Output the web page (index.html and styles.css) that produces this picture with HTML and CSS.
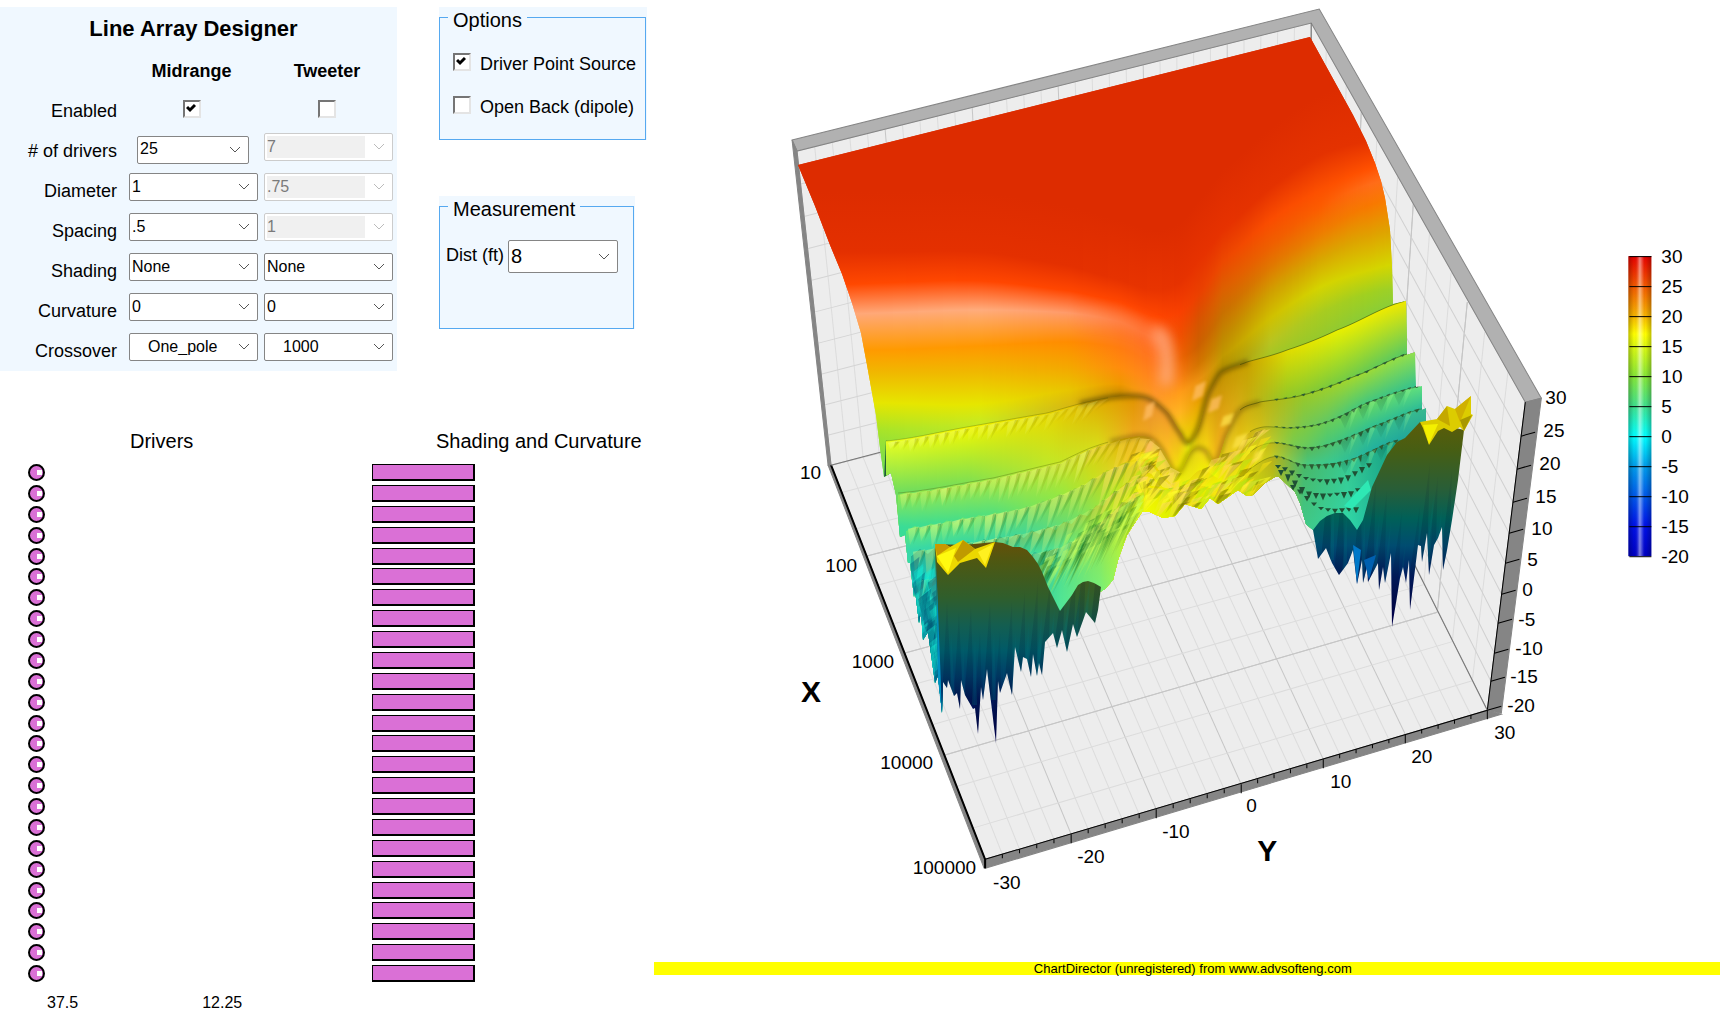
FILE: index.html
```
<!DOCTYPE html>
<html lang="en">
<head>
    <meta charset="UTF-8">
    <meta name="viewport" content="width=device-width, initial-scale=1.0">
    <title>Line Array Designer</title>
    <link rel="stylesheet" href="styles.css">
</head>
<body>
    <main class="app">
        <div class="designer">
            <div class="controls">
                <form class="panel">
                    <h1>Line Array Designer</h1>
                    <div class="fields">
                        <span></span>
                        <h2>Midrange</h2>
                        <h2>Tweeter</h2>

                        <label for="midEnabled">Enabled</label>
                        <input type="checkbox" id="midEnabled" checked>
                        <input type="checkbox" id="twEnabled" aria-label="Tweeter enabled">

                        <label for="midDrivers"># of drivers</label>
                        <select id="midDrivers" class="narrow"><option>25</option></select>
                        <select id="twDrivers" aria-label="Tweeter drivers" disabled><option>7</option></select>

                        <label for="midDiameter">Diameter</label>
                        <select id="midDiameter"><option>1</option></select>
                        <select id="twDiameter" aria-label="Tweeter diameter" disabled><option>.75</option></select>

                        <label for="midSpacing">Spacing</label>
                        <select id="midSpacing"><option>.5</option></select>
                        <select id="twSpacing" aria-label="Tweeter spacing" disabled><option>1</option></select>

                        <label for="midShading">Shading</label>
                        <select id="midShading"><option>None</option></select>
                        <select id="twShading" aria-label="Tweeter shading"><option>None</option></select>

                        <label for="midCurvature">Curvature</label>
                        <select id="midCurvature"><option>0</option></select>
                        <select id="twCurvature" aria-label="Tweeter curvature"><option>0</option></select>

                        <label for="crossType">Crossover</label>
                        <select id="crossType" class="indent"><option>One_pole</option></select>
                        <select id="crossFreq" class="indent" aria-label="Crossover frequency"><option>1000</option></select>
                    </div>
                </form>

                <div class="groups">
                    <div class="group">
                        <fieldset>
                            <legend>Options</legend>
                            <div class="option">
                                <input type="checkbox" id="pointSource" checked>
                                <label for="pointSource">Driver Point Source</label>
                            </div>
                            <div class="option">
                                <input type="checkbox" id="openBack">
                                <label for="openBack">Open Back (dipole)</label>
                            </div>
                        </fieldset>
                    </div>
                    <div class="group measurement">
                        <fieldset>
                            <legend>Measurement</legend>
                            <div class="distance">
                                <label for="dist">Dist (ft)</label>
                                <select id="dist"><option>8</option></select>
                            </div>
                        </fieldset>
                    </div>
                </div>
            </div>

            <div class="arrays">
                <section class="drivers">
                    <h3>Drivers</h3>
                    <ul id="driverList"></ul>
                    <div class="lengths"><span>37.5</span><span>12.25</span></div>
                </section>
                <section class="shading">
                    <h3>Shading and Curvature</h3>
                    <ul id="shadingList"></ul>
                </section>
            </div>
        </div>

        <div class="chart">
            <div class="plot">
                <svg id="axes" viewBox="654 0 1066 962" role="img" aria-label="Surface chart">
                    <defs>
                        <linearGradient id="scale" x1="0" y1="0" x2="0" y2="1">
                            <stop offset="0" stop-color="#e60000"/>
                            <stop offset=".1" stop-color="#f05800"/>
                            <stop offset=".2" stop-color="#f5b400"/>
                            <stop offset=".26" stop-color="#ffff00"/>
                            <stop offset=".4" stop-color="#86e636"/>
                            <stop offset=".5" stop-color="#3fe08c"/>
                            <stop offset=".6" stop-color="#00ffff"/>
                            <stop offset=".7" stop-color="#009cea"/>
                            <stop offset=".8" stop-color="#0058e8"/>
                            <stop offset=".9" stop-color="#0010e6"/>
                            <stop offset="1" stop-color="#0000c0"/>
                        </linearGradient>
                        <linearGradient id="shine">
                            <stop offset="0" stop-color="#000" stop-opacity=".25"/>
                            <stop offset=".25" stop-color="#000" stop-opacity="0"/>
                            <stop offset=".38" stop-color="#fff" stop-opacity=".1"/>
                            <stop offset=".5" stop-color="#fff" stop-opacity=".5"/>
                            <stop offset=".65" stop-color="#fff" stop-opacity=".1"/>
                            <stop offset=".75" stop-color="#000" stop-opacity="0"/>
                            <stop offset="1" stop-color="#000" stop-opacity=".25"/>
                        </linearGradient>
                    </defs>
                    <polygon fill="#ededed" points="797,151 1311,23 1525,402 1487,710 985,859 831,465"/>
                    <g id="grid"></g>
                    <g stroke="#858585">
                        <polygon fill="#b1b1b1" points="792,140 1319,9 1541,398 1525,402 1311,23 797,151"/>
                        <polygon fill="#858585" points="1525,402 1541,398 1501,713 1487,710"/>
                        <polygon fill="#858585" points="985,859 1487,710 1501,714 985,868"/>
                        <polygon fill="#858585" points="792,140 797,151 831,465 828,465"/>
                        <polygon fill="#858585" points="828,465 831,465 985,859 984,868"/>
                    </g>
                    <path fill="none" stroke="#000" stroke-width="2" d="M831 465L985 859V868"/>
                    <path fill="none" stroke="#000" d="M985 859L1487 710L1525 402"/>
                    <path fill="none" stroke="#777" d="M1311 23V40M831 465L884 451M1487 710L1405 546"/>
                    <g id="ticks"></g>
                    <g id="labels"></g>
                    <text class="axis-title" x="811" y="702">X</text>
                    <text class="axis-title" x="1267" y="861">Y</text>
                    <rect x="1628" y="256" width="23" height="300" fill="url(#scale)"/>
                    <rect x="1628" y="256" width="23" height="300" fill="url(#shine)"/>
                    <g id="legend"></g>
                </svg>
                <canvas id="surface" width="1066" height="962"></canvas>
            </div>
            <p class="notice">ChartDirector (unregistered) from www.advsofteng.com</p>
        </div>
    </main>
    <script src="chart.js"></script>
</body>
</html>
```
FILE: styles.css
```
body {
    margin: 0;
    background: #fff;
    color: #000;
    font-family: "Liberation Sans", Arial, sans-serif;
    font-size: 18px;
    line-height: 20px;
}
h1, h2, h3, p, ul, fieldset {
    margin: 0;
    padding: 0;
}
.app {
    display: flex;
    align-items: flex-start;
}
.designer {
    width: 38%;
    flex-shrink: 0;
    padding-top: 7px;
}
.controls {
    display: flex;
    gap: 42px;
}
.panel {
    width: 397px;
    height: 364px;
    background: #f0f8ff;
}
.panel h1 {
    padding: 10px 10px 0 0;
    font-size: 22px;
    line-height: 24px;
    text-align: center;
}
.panel h2 {
    padding: 8px 4px 0 0;
    font-size: 18px;
    text-align: center;
}
.fields {
    display: grid;
    grid-template-columns: 117px 129px 130px;
    grid-auto-rows: 40px;
    column-gap: 6px;
    margin-top: 6px;
    align-items: center;
}
.fields > :nth-child(3n + 1) {
    padding-top: 8px;
    text-align: right;
}
.fields > :not(:nth-child(3n + 1)) {
    margin-left: 6px;
    margin-right: -6px;
}
input[type="checkbox"] {
    appearance: none;
    box-sizing: border-box;
    width: 18px;
    height: 18px;
    margin: 0;
    border: 2px solid;
    border-color: #757575 #e4e4e4 #e4e4e4 #757575;
    background: #fff;
}
.fields input[type="checkbox"] {
    justify-self: center;
    margin: 4px -4px 0 4px;
}
input[type="checkbox"]:checked {
    background: #fff url("data:image/svg+xml,%3Csvg xmlns='http://www.w3.org/2000/svg' width='10' height='10'%3E%3Cpath d='M1 4L4 7L9 2' fill='none' stroke='black' stroke-width='3'/%3E%3C/svg%3E") 1px 1px no-repeat;
}
select {
    appearance: none;
    box-sizing: border-box;
    width: 100%;
    height: 28px;
    padding: 0 26px 2px 2px;
    border: 1px solid #858585;
    border-radius: 2px;
    background: #fff url("data:image/svg+xml,%3Csvg xmlns='http://www.w3.org/2000/svg' width='12' height='8'%3E%3Cpath d='M1 1L6 6L11 1' fill='none' stroke='%23555'/%3E%3C/svg%3E") right 7px center no-repeat;
    color: #000;
    font: 16px "Liberation Sans", Arial, sans-serif;
}
.fields select {
    width: 129px;
}
.fields select.narrow {
    width: 112px;
    margin-left: 14px;
    margin-top: 5px;
}
.fields select.indent {
    padding-left: 18px;
}
select:disabled {
    border-color: #ccc;
    background:
        url("data:image/svg+xml,%3Csvg xmlns='http://www.w3.org/2000/svg' width='12' height='8'%3E%3Cpath d='M1 1L6 6L11 1' fill='none' stroke='%23bbb'/%3E%3C/svg%3E") right 7px center no-repeat,
        linear-gradient(#f0f0f0, #f0f0f0) 2px center / 98px 22px no-repeat,
        #fff;
    color: #7a7a7a;
    opacity: 1;
}
.group {
    width: 208px;
    height: 133px;
    margin-bottom: 56px;
    background: #f0f8ff;
}
.measurement {
    width: 196px;
}
fieldset {
    box-sizing: border-box;
    height: 133px;
    margin-right: 1px;
    padding-top: 24px;
    border: 1px solid #56a9f0;
}
legend {
    height: 20px;
    margin-left: 8px;
    padding: 0 5px;
    font-size: 20px;
    line-height: 26px;
}
.option {
    display: flex;
    align-items: center;
    gap: 9px;
    height: 22px;
    margin: 0 0 21px 13px;
    white-space: nowrap;
}
.option label {
    padding-top: 3px;
}
.distance {
    display: flex;
    align-items: center;
    gap: 4px;
    padding-left: 6px;
    white-space: nowrap;
}
.distance label {
    padding-bottom: 4px;
}
.distance select {
    width: 110px;
    height: 33px;
    font-size: 20px;
}
.arrays {
    display: flex;
    margin-top: 44px;
}
.arrays h3 {
    font-size: 20px;
    font-weight: normal;
    line-height: 24px;
}
.drivers {
    box-sizing: border-box;
    width: 372px;
    padding-left: 28px;
}
.drivers h3 {
    padding-left: 102px;
}
.shading h3 {
    padding-left: 64px;
}
.arrays ul {
    display: flex;
    flex-direction: column;
    justify-content: space-between;
    height: 518px;
    margin-top: 11px;
    list-style: none;
}
.arrays li {
    box-sizing: border-box;
    height: 17px;
    border: 2px solid #000;
    background: #da70d6;
}
.drivers li {
    width: 17px;
    border-radius: 50%;
    background: linear-gradient(#fff, #fff) 7px 4px / 5px 5px no-repeat, #da70d6;
}
.shading li {
    width: 103px;
    border-width: 1px 2px 2px 1px;
}
.lengths {
    display: flex;
    gap: 124px;
    padding: 11px 0 0 19px;
    font-size: 16px;
}
.chart {
    flex: 1;
    min-width: 0;
}
.plot {
    position: relative;
}
.plot svg {
    display: block;
    width: 100%;
}
/* surface is painted over the floor and walls */
.plot canvas {
    position: absolute;
    top: 0;
    left: 0;
    width: 100%;
    height: 100%;
    pointer-events: none;
}
.plot text {
    font-size: 19px;
}
.plot .end {
    text-anchor: end;
}
.plot .axis-title {
    font-size: 30px;
    font-weight: bold;
    text-anchor: middle;
}
.notice {
    padding-left: 12px;
    background: #ff0;
    font-size: 13px;
    line-height: 13px;
    text-align: center;
}
```
FILE: chart.js
```
// Driver and shading columns
const driverCount = Number(document.getElementById('midDrivers').value);
for (let i = 0; i < driverCount; i++) {
    document.getElementById('driverList').appendChild(document.createElement('li'));
    document.getElementById('shadingList').appendChild(document.createElement('li'));
}

const NS = 'http://www.w3.org/2000/svg';

function line(parent, x1, y1, x2, y2, color, width) {
    const el = document.createElementNS(NS, 'line');
    const attrs = { x1, y1, x2, y2, stroke: color, 'stroke-width': width || 1 };
    for (const key in attrs) el.setAttribute(key, attrs[key]);
    document.getElementById(parent).appendChild(el);
}

function label(parent, x, y, text, cls) {
    const el = document.createElementNS(NS, 'text');
    el.setAttribute('x', x);
    el.setAttribute('y', y + 7);
    if (cls) el.setAttribute('class', cls);
    el.textContent = text;
    document.getElementById(parent).appendChild(el);
}

const mix = (a, b, t) => a + (b - a) * t;
const lerpPt = (list, v) => {
    const i = Math.min(Math.floor(v), list.length - 2);
    return [mix(list[i][0], list[i + 1][0], v - i), mix(list[i][1], list[i + 1][1], v - i)];
};

// Corners of the axis box along each scale
const yFront = [[985, 859], [1071, 834], [1156, 809], [1241, 784], [1323, 759], [1405, 734], [1487, 710]];
const yBack = [[831, 465], [911, 445], [991, 425], [1071, 405], [1149, 385], [1227, 365], [1305, 345]];
const yTop = [[797, 151], [885, 129], [972, 107], [1058, 86], [1143, 65], [1227, 44], [1311, 23]];
const xLeft = [[831, 465], [866, 556], [904, 653], [944, 755], [985, 859]];
const xRight = [[1305, 345], [1347, 430], [1392, 520], [1437, 612], [1487, 710]];
const xTop = [[1311, 23], [1361, 112], [1413, 204], [1467, 302], [1525, 402]];
const zRight = [402, 436, 469, 502, 533, 563, 594, 623, 653, 681, 710];

for (let i = 0; i <= 30; i++) {
    const v = i / 5;
    const major = i % 5 === 0;
    const a = lerpPt(yFront, v), b = lerpPt(yBack, v), c = lerpPt(yTop, v);
    const color = major ? '#c6c6c6' : '#dcdcdc';
    line('grid', a[0], a[1], b[0], b[1], color);
    line('grid', b[0], b[1], c[0], c[1], color);
    line('ticks', a[0], a[1], a[0], a[1] + (major ? 9 : 4), '#000');
}
for (let d = 0; d < 4; d++) {
    [0, 0.3, 0.7, 1].forEach(f => {
        const a = lerpPt(xLeft, d + f), b = lerpPt(xRight, d + f), c = lerpPt(xTop, d + f);
        const color = f === 0 || f === 1 ? '#c6c6c6' : '#dcdcdc';
        line('grid', a[0], a[1], b[0], b[1], color);
        line('grid', b[0], b[1], c[0], c[1], color);
    });
}
zRight.forEach((y, i) => {
    const x = 1525 - (y - 402) * 38 / 308;
    const left = [797 + i * 3.4, 151 + i * 33 - i * i * 0.16];
    const back = [1311 - i * 0.6, 23 + i * 32.2];
    line('grid', x, y, back[0], back[1], '#d0d0d0');
    line('grid', left[0], left[1], back[0], back[1], '#d4d4d4');
    if (i > 0) line('ticks', x, y, x + 14, y - 4, '#000');
});

[[821, 472, 10], [857, 565, 100], [894, 661, 1000], [933, 762, 10000], [976, 867, 100000]]
    .forEach(l => label('labels', l[0], l[1], l[2], 'end'));
[[993, 882, -30], [1077, 856, -20], [1162, 831, -10], [1246, 805, 0], [1330, 781, 10], [1411, 756, 20], [1494, 732, 30]]
    .forEach(l => label('labels', l[0], l[1], l[2]));
[[1545, 397], [1543, 430], [1539, 463], [1535, 496], [1531, 528], [1527, 559], [1522, 589], [1518, 619], [1515, 648], [1510, 676], [1507, 705]]
    .forEach((l, i) => label('labels', l[0], l[1], 30 - i * 5));
for (let i = 0; i <= 10; i++) {
    line('legend', 1629, 256.5 + i * 30, 1651, 256.5 + i * 30, '#000');
    label('legend', 1661, 256 + i * 30, 30 - i * 5);
}

// Surface
const ctx = document.getElementById('surface').getContext('2d');
ctx.translate(-654, 0);

let seed = 7;
function rand() {
    seed = (seed * 16807) % 2147483647;
    return seed / 2147483647;
}

function mixColor(a, b, t) {
    const p = parseInt(a, 16), q = parseInt(b, 16);
    const ch = s => Math.round(mix((p >> s) & 255, (q >> s) & 255, t));
    return 'rgb(' + ch(16) + ',' + ch(8) + ',' + ch(0) + ')';
}

function poly(points, fill) {
    ctx.beginPath();
    points.forEach(p => ctx.lineTo(p[0], p[1]));
    ctx.closePath();
    ctx.fillStyle = fill;
    ctx.fill();
}

// facet that fades out towards its last point
function facet(a, b, tip, rgb, alpha) {
    const g = ctx.createLinearGradient((a[0] + b[0]) / 2, (a[1] + b[1]) / 2, tip[0], tip[1]);
    g.addColorStop(0, 'rgba(' + rgb + ',' + alpha + ')');
    g.addColorStop(1, 'rgba(' + rgb + ',' + alpha * 0.25 + ')');
    poly([a, b, tip], g);
}

// index of the segment that holds x, and the place in it
function locate(list, x) {
    let i = 0;
    while (i < list.length - 2 && x > list[i + 1][0]) i++;
    const t = (x - list[i][0]) / (list[i + 1][0] - list[i][0]);
    return [i, Math.max(0, Math.min(1, t))];
}

function spline(list, x, get) {
    const [i, t] = locate(list, x);
    const p = k => get(list[Math.max(0, Math.min(list.length - 1, k))]);
    const a = p(i - 1), b = p(i), c = p(i + 1), d = p(i + 2);
    return b + t * (c - a + t * (2 * a - 5 * b + 4 * c - d + t * (3 * (b - c) + d - a))) / 2;
}

const outline = [
    [798, 165], [1310, 37], [1353, 115], [1366, 141], [1375, 163], [1381, 181], [1385, 198], [1390, 230], [1392, 267], [1393, 304],
    [1406, 301], [1407, 355], [1415, 352], [1416, 387], [1422, 386], [1422, 410], [1426, 408], [1426, 440], [1400, 520],
    [1363, 530], [1313, 530], [1306, 524], [1300, 503], [1295, 492], [1279, 477], [1275, 477], [1265, 483], [1253, 495],
    [1247, 496], [1238, 490], [1218, 504], [1210, 498], [1201, 509], [1185, 504], [1175, 516], [1163, 518], [1150, 512],
    [1142, 512], [1127, 535], [1118, 560], [1113, 580], [1105, 589], [1095, 595], [1060, 616], [1040, 600], [945, 600],
    [942, 713], [938, 676], [935, 683],
    [928, 632], [923, 640], [921, 612], [919, 623], [915, 590], [914, 597], [910, 563], [908, 563], [905, 535], [900, 537],
    [896, 495], [891, 473], [884, 477], [880, 448], [876, 415], [867, 365], [861, 333], [852, 303], [842, 274], [830, 245], [815, 206]
];
ctx.save();
ctx.beginPath();
outline.forEach(p => ctx.lineTo(p[0], p[1]));
ctx.closePath();
ctx.clip();

// smooth low frequency part, x then [y, colour] from back to front
const smooth = [
    [790, [252, 'e43000'], [287, 'ff4800'], [316, 'ffa878'], [350, 'ff9a00'], [373, 'f0b800'], [403, 'e6e600'], [430, 'a8e428'], [490, '58d868']],
    [880, [252, 'e43000'], [283, 'ff4800'], [313, 'ffa878'], [350, 'ff9a00'], [373, 'f0b800'], [403, 'e6e600'], [430, 'a8e428'], [480, '60d860']],
    [980, [252, 'e43000'], [281, 'ff4600'], [310, 'ffac7c'], [346, 'ff9800'], [372, 'f0b800'], [404, 'e6e600'], [422, 'c8ea20'], [450, 'a8e430']],
    [1070, [266, 'e43000'], [291, 'ff4600'], [313, 'ff9a68'], [342, 'ff8c00'], [368, 'f4a800'], [390, 'e8c400'], [405, 'd8b810'], [430, 'd0c010']],
    [1120, [280, 'e63200'], [302, 'ff4600'], [322, 'ff7838'], [348, 'ff7c10'], [368, 'ff8c0c'], [384, 'f09800'], [396, 'c08800'], [425, 'd89000']],
    [1155, [290, 'e83400'], [316, 'ff4600'], [338, 'ff6820'], [362, 'ff7820'], [380, 'ff8820'], [396, 'ff9828'], [410, 'ffa828'], [440, 'f0b020']],
    [1180, [282, 'e63200'], [312, 'f84000'], [336, 'f05000'], [358, 'ee6200'], [376, 'f87c10'], [392, 'ff9c18'], [412, 'ffb420'], [445, 'e8e000']],
    [1198, [260, 'e63200'], [294, 'ea4000'], [322, 'd65400'], [345, 'cc6000'], [364, 'd47400'], [380, 'ec9010'], [400, 'e8a000'], [435, 'e8d000']],
    [1222, [230, 'e63200'], [262, 'ec4800'], [290, 'dc6000'], [313, 'c87000'], [338, 'c08800'], [356, 'c09800'], [374, 'a88800'], [400, 'd0a000']],
    [1270, [188, 'e43200'], [220, 'fa4c00'], [246, 'ee6000'], [267, 'e07800'], [293, 'd0a000'], [318, 'd0c000'], [342, 'b8c420'], [365, '98c828']],
    [1320, [155, 'e43200'], [190, 'fc5000'], [207, 'fc5c00'], [233, 'ee7c00'], [260, 'd8a800'], [287, 'd4d400'], [313, 'a8cc20'], [345, '90c830']],
    [1370, [140, 'e43200'], [168, 'ff5000'], [184, 'ff6c18'], [205, 'f87800'], [235, 'e0a000'], [270, 'd4d400'], [293, 'a0d020'], [325, '80cc40']],
    [1410, [130, 'e43200'], [158, 'ff5800'], [178, 'ff7018'], [200, 'f88000'], [232, 'dcaa00'], [262, 'd4d800'], [290, '98d030'], [320, '78cc48']]
];
for (let x = 790; x < 1410; x++) {
    const [i, t] = locate(smooth, x);
    const g = ctx.createLinearGradient(0, 0, 0, 600);
    g.addColorStop(0, '#dd2c00');
    for (let k = 1; k <= 8; k++) {
        const y = spline(smooth, x, c => c[k][0]);
        if (k === 1) g.addColorStop((y - 60) / 600, '#dd2c00');
        g.addColorStop(y / 600, mixColor(smooth[i][k][1], smooth[i + 1][k][1], t));
    }
    ctx.fillStyle = g;
    ctx.fillRect(x, 0, 2, 600);
}

// specular streak on the shoulder
ctx.save();
ctx.filter = 'blur(6px)';
ctx.lineCap = 'round';
ctx.strokeStyle = 'rgba(255,180,140,.75)';
ctx.lineWidth = 14;
ctx.beginPath();
ctx.moveTo(1159, 334);
ctx.quadraticCurveTo(1170, 350, 1166, 380);
ctx.stroke();
ctx.strokeStyle = 'rgba(255,150,100,.35)';
ctx.beginPath();
ctx.moveTo(1085, 315);
ctx.quadraticCurveTo(1140, 318, 1161, 340);
ctx.stroke();
ctx.restore();

// lobes, [x, crest y, crest colour, colour at the next crest]
const ridges = [
    [[886, 441, 'eaff20', '6cdc60'], [967, 427, 'f4f800', '80e050'], [1047, 413, 'e8d800', 'c0e828'], [1097, 400, 'e0ac00', 'd8dc18'],
     [1133, 396, 'e09400', 'f0a820'], [1150, 399, 'e89030', 'f0a820'], [1167, 413, 'f09828', 'ffc820'], [1180, 433, 'f0b020', 'f0f000'],
     [1188, 443, 'e8f010', 'f0f000'], [1198, 428, 'd8b008', 'f0d810'], [1207, 397, 'd89810', 'f8d810'], [1220, 373, 'c09000', 'f8b020'],
     [1247, 362, 'c8a000', 'c8b010'], [1287, 350, 'e0dc00', '90c828'], [1337, 330, 'e8f000', '78cc40'], [1406, 301, 'f0e800', '50c868']],
    [[898, 493, '90e850', '38dc98'], [993, 478, 'a8e840', '58e078'], [1060, 462, 'c8e028', '98e840'], [1093, 447, 'd8d010', 'c8e020'],
     [1127, 438, 'e0b000', 'f0c820'], [1147, 437, 'e0a818', 'f0d010'], [1160, 447, 'f8c030', 'f0e010'], [1177, 473, 'f0f000', 'e8f010'],
     [1192, 450, 'e0d010', 'f0e810'], [1205, 450, 'f8d020', 'f0f000'], [1215, 463, 'f0f000', 'f0f800'], [1226, 435, 'e8c020', 'f0d820'],
     [1240, 410, 'd0a810', 'e8c810'], [1260, 402, 'c0b010', 'd0c018'], [1303, 395, '98c828', '78c850'], [1353, 377, 'a0d830', '48c878'], [1415, 352, '90e050', '30c090']],
    [[906, 527, '60e878', '38d8a8'], [960, 518, '70e870', '38d8a0'], [1027, 506, '70d860', '48d890'], [1077, 487, 'a0d838', '78e060'],
     [1113, 467, 'c8d018', 'b8e828'], [1147, 459, 'e0b810', 'f0d810'], [1162, 476, 'f0e000', 'f0f000'], [1178, 488, 'f0f000', 'e0f010'],
     [1200, 470, 'e8d010', 'f0f010'], [1220, 478, 'f0f000', 'f0f800'], [1232, 455, 'e0c820', 'f0e810'], [1247, 434, 'd0b010', 'e8d810'],
     [1263, 427, 'c0b818', 'd8cc20'], [1293, 428, '88c838', '78cc50'], [1327, 422, '68cc58', '48c878'], [1367, 403, '68d860', '30c090'], [1422, 386, '60e080', '28b898']],
    [[911, 550, '28b090', '18c8c0'], [980, 540, '38b880', '20c8b0'], [1020, 533, '40b870', '38d8a0'], [1060, 523, '70c850', '58e088'],
     [1093, 507, '98d038', '98e848'], [1120, 487, 'c8d818', 'd0f020'], [1147, 473, 'e8d808', 'f0f000'], [1165, 490, 'f0f000', 'e8f800'],
     [1200, 486, 'e0d808', 'f0f800'], [1225, 490, 'f0f000', 'e0e800'], [1247, 455, 'd8c810', 'f0e000'], [1270, 443, 'c0b818', 'c8cc20'],
     [1307, 448, '58b858', '48c880'], [1333, 443, '50c070', '38c890'], [1373, 427, '38c088', '20b0a0'], [1426, 408, '38b890', '20a098']],
    [[914, 580, '10a0a0', '0070b0'], [960, 570, '10a098', '0090b0'], [1020, 555, '28b898', '18c0b0'], [1060, 546, '50d888', '50e898'],
     [1100, 522, '98e048', '78f078'], [1130, 496, 'd8e818', 'c0f830'], [1147, 486, 'f0e800', 'f0ff00'], [1190, 492, 'e8f000', 'd0e000'],
     [1230, 482, 'f0e808', 'd8e000'], [1272, 457, 'b8b018', 'b8c818'], [1303, 465, '48b868', '40c888'], [1347, 461, '38c890', '30d8a8'], [1400, 440, '109880', '10a098']],
    [[930, 700, '0070b0', '0070b0'], [1000, 660, '10a0b0', '10a0b0'], [1060, 612, '40e0a0', '40e0a0'], [1105, 590, '78f078', '78f078'],
     [1145, 518, 'e8f800', 'e8f800'], [1275, 490, 'c0c810', 'c0c810'], [1307, 530, '38c890', '38c890'], [1400, 530, '18a898', '18a898']]
];
const crestY = (k, x) => {
    const [i, t] = locate(ridges[k], x);
    return mix(ridges[k][i][1], ridges[k][i + 1][1], t);
};
const curveY = (k, x) => spline(ridges[k], x, p => p[1]);

function strokeCrest(k, from, to, color, width) {
    ctx.beginPath();
    for (let x = from; x < to; x += 2) ctx.lineTo(x, curveY(k, x));
    ctx.lineWidth = width;
    ctx.strokeStyle = color;
    ctx.stroke();
}

// dark inner sides at the left end
poly([[886, 440], [884, 480], [892, 472]], '#1e5a38');
poly([[898, 493], [900, 540], [905, 534]], '#0c5048');
poly([[906, 527], [908, 566], [912, 560]], '#084c50');

for (let k = 0; k < 5; k++) {
    const r = ridges[k];
    const x0 = r[0][0], x1 = r[r.length - 1][0];
    for (let x = x0; x < x1; x++) {
        const [i, t] = locate(r, x);
        const jag = k > 0 && x < 1120 ? Math.abs(((x - x0) % 16) - 8) * 0.25 * Math.min(k, 3) : 0;
        const y = curveY(k, x) + jag;
        const bottom = Math.max(y + 8, crestY(k + 1, x));
        const g = ctx.createLinearGradient(0, y, 0, bottom);
        g.addColorStop(0, mixColor(r[i][2], r[i + 1][2], t));
        g.addColorStop(1, mixColor(r[i][3], r[i + 1][3], t));
        ctx.fillStyle = g;
        ctx.fillRect(x, y, 2, 260);
    }

    // crest shadow, soft and wide near the middle
    if (k < 2) {
        ctx.save();
        ctx.filter = 'blur(2px)';
        strokeCrest(k, k === 0 ? 1080 : 1110, k === 0 ? 1250 : 1262, 'rgba(90,70,0,' + (k === 0 ? 0.6 : 0.4) + ')', 5);
        ctx.restore();
        strokeCrest(k, x0, 1110, 'rgba(70,80,0,.3)', 1);
        strokeCrest(k, 1240, x1, 'rgba(50,60,0,.5)', 1);
    } else {
        strokeCrest(k, 1250, x1, 'rgba(40,60,0,.35)', 1);
    }

    // facets hanging from the crest
    const step = k === 0 ? 10 : 9 + k;
    const limit = k === 0 ? 1100 : 1180;
    for (let x = x0 + 2; x < limit; x += step) {
        const inner = Math.max(0, Math.min(1, (x - 940) / 180));
        const len = mix(12 + k * 5, k === 0 ? 18 : 30, inner) * (0.7 + rand() * 0.6);
        const tip = x - mix(-2, 9, inner);
        const y = curveY(k, x), y2 = curveY(k, x + step);
        const a = (0.25 + rand() * 0.35) * (k === 0 ? 1 - inner * 0.6 : 1);
        facet([x, y + 2], [x + step, y2 + 1], [tip, y + len], x < 1090 ? '240,255,130' : '255,225,110', a);
        facet([x + step - 3, y2 + 2], [x + step + 2, y2 + 2], [tip + 3, y + len], k > 1 ? '20,90,30' : '110,110,0', a * 0.55);
    }

    // small dark back faces on the right
    if (k > 0) {
        for (let x = 1274; x < x1 - 6; x += k === 1 ? 9 : 7) {
            const y = curveY(k, x);
            const peak = x > 1290 && x < 1370 ? 1.2 : 0.6;
            const size = k === 1 ? rand() : (k - 1) * peak * (0.5 + rand() * 0.9);
            poly([[x, y - 1], [x + 4 + rand() * 2, curveY(k, x + 5) - 1], [x + 3, y + size]], '#2c5c34');
        }
        for (let x = 1340; k > 1 && x < x1 - 20; x += 18) {
            const y = curveY(k, x);
            facet([x, y + 1], [x + 12, curveY(k, x + 12) + 1], [x + 5, y + 12], '10,80,60', 0.25);
            facet([x + 12, curveY(k, x + 12)], [x + 18, curveY(k, x + 18)], [x + 9, y + 14], '160,255,150', 0.3);
        }
    }
}

// fine lobes between the last crests
[[[1275, 465], [1307, 478], [1340, 477], [1370, 462]], [[1278, 470], [1307, 492], [1350, 491], [1362, 484]], [[1290, 485], [1318, 507], [1358, 507]]].forEach(row => {
    for (let x = row[0][0]; x < row[row.length - 1][0]; x += 7) {
        const y = spline(row, x, p => p[1]);
        poly([[x, y], [x + 6, y], [x + 3, y + 3 + rand() * 5]], '#1f5034');
    }
});
poly([[1368, 480], [1371, 490], [1352, 509], [1344, 506]], '#2ee8b4');

// facets of the high frequency middle
ctx.save();
ctx.filter = 'blur(0.6px)';
for (let n = 0; n < 150; n++) {
    const x = 1130 + rand() * 135;
    const top = x < 1180 ? mix(440, 478, (x - 1130) / 50) : mix(478, 425, (x - 1180) / 85);
    const y = top + rand() * (505 - top);
    const h = 9 + rand() * 13;
    const w = 6 + rand() * 7;
    const lean = x > 1170 || n % 3 ? -h * 0.5 : h * 0.4;
    const shades = ['255,255,40', '110,100,0', '255,215,100', '180,230,20', '255,230,20'];
    facet([x, y], [x + w, y - 3], [x + lean, y + h], shades[n % 5], n % 5 === 1 ? 0.5 : 0.55);
}
// long streaks running down to the left notch
for (let n = 0; n < 110; n++) {
    const x = 1040 + rand() * 100;
    const y = 490 + (1140 - x) * 0.6 + rand() * 30;
    facet([x, y], [x + 6, y - 3], [x - 14, y + 34], n % 2 ? '20,110,30' : '200,255,90', n % 2 ? 0.32 : 0.42);
}
// narrow faces at the left border
for (let n = 0; n < 60; n++) {
    const x = 909 + rand() * 26;
    const y = 545 + (x - 909) * 2 + rand() * 90;
    facet([x, y], [x + 10, y - 8], [x + 6, y + 24], n % 2 ? '0,80,110' : '20,235,210', 0.42);
}
ctx.restore();
ctx.restore();

// bright spots on the lobes
ctx.save();
ctx.filter = 'blur(1.5px)';
[[1149, 411, 6, 10], [1149, 447, 5, 7], [1199, 391, 7, 10], [1215, 404, 7, 9], [1227, 420, 7, 7], [1240, 441, 8, 8], [1258, 456, 6, 7]].forEach(s => {
    poly([[s[0] - s[2], s[1] + s[3]], [s[0] - s[2] / 2, s[1] - s[3] / 2], [s[0] + s[2], s[1] - s[3]], [s[0] + s[2] / 2, s[1] + s[3] / 2]], s[0] > 1220 ? 'rgba(255,230,80,.7)' : 'rgba(255,190,100,.75)');
});
ctx.restore();

// front faces seen from below
function curtain(points, stops, y0, y1, streaks) {
    const g = ctx.createLinearGradient(0, y0, 0, y1);
    stops.forEach(s => g.addColorStop(s[0], s[1]));
    poly(points, g);
    ctx.save();
    ctx.clip();
    streaks.forEach(s => facet([s[0] - 5, s[1]], [s[0] + 5, s[1]], [s[0] + s[2], s[1] - 100], '0,10,40', 0.22));
    streaks.forEach(s => facet([s[0] + 3, s[1]], [s[0] + 8, s[1]], [s[0] + 4 + s[2], s[1] - 70], '0,130,130', 0.22));
    ctx.restore();
}

const leftStreaks = [[947, 700, 0], [958, 710, 1], [969, 705, 2], [978, 730, 2], [988, 700, 2], [997, 730, 3], [1008, 700, 4], [1020, 690, 5], [1032, 680, 6], [1043, 675, 8], [1057, 660, 9], [1068, 655, 9], [1078, 640, 9], [1095, 630, 6]];
curtain([
    [935, 544], [963, 545], [995, 542], [1003, 543], [1013, 547], [1020, 547], [1027, 550], [1033, 557], [1038, 564], [1042, 572],
    [1048, 587], [1060, 611], [1072, 595], [1078, 585], [1083, 582], [1088, 581], [1094, 583], [1101, 587], [1098, 610],
    [1095, 623], [1086, 612], [1077, 637], [1073, 624], [1067, 652], [1062, 630], [1057, 648], [1053, 633], [1045, 642],
    [1042, 675], [1039, 663], [1037, 676], [1033, 654], [1031, 677], [1027, 659], [1023, 657], [1021, 672], [1015, 647],
    [1012, 695], [1007, 673], [1000, 693], [998, 681], [996, 743], [987, 669], [983, 700], [981, 687], [978, 734],
    [975, 708], [973, 709], [965, 695], [961, 680], [960, 709], [957, 693], [954, 696], [948, 680], [947, 688], [943, 682], [942, 713], [938, 660]
], [[0, '#665008'], [0.1, '#4e5812'], [0.28, '#2f5e2c'], [0.42, '#145e50'], [0.55, '#005a68'], [0.68, '#003c68'], [0.8, '#001658'], [1, '#000048']], 542, 740, leftStreaks);
poly([[936, 560], [938, 680], [942, 713], [940, 660]], '#0090c0');
poly([[935, 544], [945, 544], [950, 547], [963, 540], [975, 549], [995, 542], [986, 568], [977, 558], [960, 563], [948, 575], [937, 562]], '#ecd800');
poly([[935, 544], [945, 544], [950, 547], [937, 556]], '#c89800');
poly([[963, 540], [975, 549], [958, 562], [954, 556]], '#bf9a00');
poly([[937, 556], [956, 548], [948, 573]], '#fffa10');
poly([[978, 552], [993, 544], [985, 565]], '#fff020');

const rightStreaks = [[1326, 560, 4], [1339, 575, 4], [1357, 584, 4], [1368, 582, 8], [1379, 590, 8], [1392, 610, 10], [1410, 605, 10], [1422, 562, 8], [1430, 575, 8], [1444, 570, 8]];
curtain([
    [1313, 530], [1320, 521], [1327, 516], [1335, 513], [1343, 513], [1350, 520], [1357, 530], [1363, 520], [1372, 487],
    [1380, 470], [1387, 455], [1397, 442], [1405, 438], [1420, 422], [1440, 424], [1464, 430], [1458, 480], [1452, 520], [1447, 550],
    [1443, 570], [1442, 527], [1438, 538], [1434, 545], [1429, 575], [1427, 533], [1422, 562], [1421, 546], [1418, 545],
    [1410, 610], [1409, 560], [1406, 583], [1403, 567], [1400, 578], [1392, 627], [1391, 553], [1385, 583], [1383, 567],
    [1379, 590], [1378, 563], [1368, 582], [1367, 567], [1363, 583], [1362, 560], [1357, 584], [1353, 550], [1348, 563],
    [1339, 575], [1332, 563], [1326, 548], [1318, 559], [1316, 547]
], [[0, '#5c5c08'], [0.15, '#465e14'], [0.35, '#285e38'], [0.5, '#006058'], [0.64, '#004c70'], [0.8, '#001c60'], [1, '#000048']], 422, 615, rightStreaks);
poly([[1353, 545], [1357, 584], [1361, 550]], '#0078c8');
poly([[1364, 560], [1369, 580], [1376, 555]], '#0060b0');
poly([[1420, 422], [1437, 419], [1447, 406], [1455, 409], [1471, 396], [1471, 414], [1473, 415], [1464, 431], [1460, 427], [1452, 432], [1444, 428], [1438, 431], [1429, 445], [1423, 428]], '#dccc00');
poly([[1437, 419], [1447, 406], [1450, 426]], '#c4a800');
poly([[1455, 409], [1471, 396], [1460, 422]], '#d0b000');
poly([[1423, 425], [1438, 424], [1429, 444]], '#f4f000');
poly([[1464, 431], [1460, 420], [1472, 415]], '#a89800');
```
